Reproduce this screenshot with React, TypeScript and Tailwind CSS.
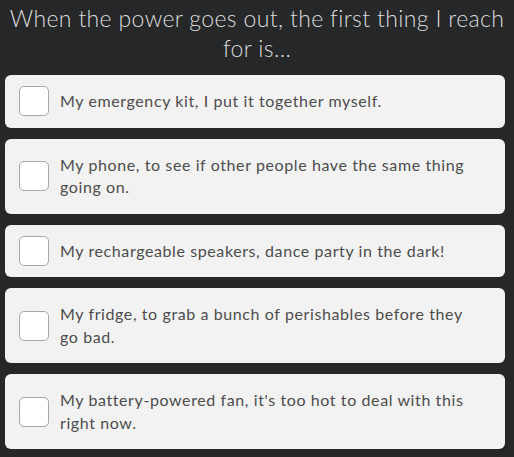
const options = [
  'My emergency kit, I put it together myself.',
  'My phone, to see if other people have the same thing going on.',
  'My rechargeable speakers, dance party in the dark!',
  'My fridge, to grab a bunch of perishables before they go bad.',
  "My battery-powered fan, it's too hot to deal with this right now.",
];

export default function App() {
  return (
    <div
      className="min-h-screen w-[514px] bg-[#262729] pb-[8px] pl-[5px] pr-[9px]"
      style={{ fontFamily: 'Lato, "Open Sans", sans-serif' }}
    >
      <h1 className="pt-[3px] pl-[4px] text-center text-[23px] font-light leading-[30px] tracking-[0.35px] text-[#dcdcdc]">
        When the power goes out, the first thing I reach for is...
      </h1>
      <div className="mt-[12px] flex flex-col gap-[11px]">
        {options.map((opt) => (
          <label
            key={opt}
            className="flex cursor-pointer items-center gap-[11px] rounded-[6px] bg-[#f2f2f2] py-[11px] pl-[14px] pr-[27px]"
          >
            <span className="h-[30px] w-[30px] shrink-0 rounded-[5px] border border-[#a8a8a8] bg-white" />
            <span className="py-[4px] text-[16px] leading-[22.5px] tracking-[0.6px] text-[#4d4d4d]">{opt}</span>
          </label>
        ))}
      </div>
    </div>
  );
}
